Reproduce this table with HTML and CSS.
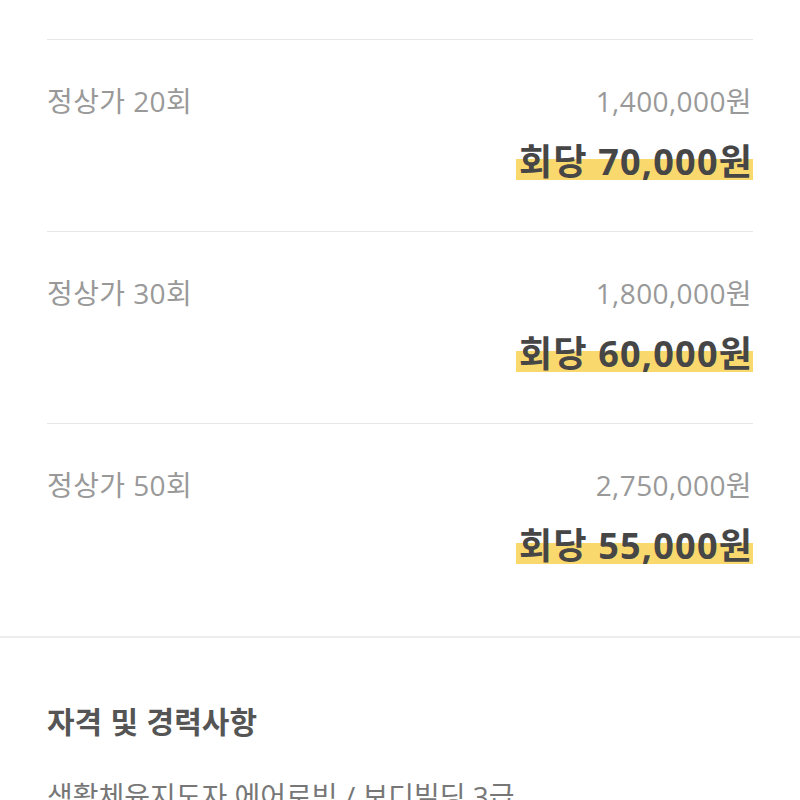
FILE: index.html
```html
<!DOCTYPE html>
<html lang="ko">
<head>
<meta charset="utf-8">
<link rel="stylesheet" href="styles.css">
</head>
<body>
<div class="page">
  <section class="prices">
    <div class="row">
      <div class="line">
        <span class="label">정상가 20회</span>
        <span class="total">1,400,000원</span>
      </div>
      <div class="per"><span class="hl">회당 70,000원</span></div>
    </div>
    <div class="row">
      <div class="line">
        <span class="label">정상가 30회</span>
        <span class="total">1,800,000원</span>
      </div>
      <div class="per"><span class="hl">회당 60,000원</span></div>
    </div>
    <div class="row last">
      <div class="line">
        <span class="label">정상가 50회</span>
        <span class="total">2,750,000원</span>
      </div>
      <div class="per"><span class="hl">회당 55,000원</span></div>
    </div>
  </section>
  <section class="career">
    <h2 class="title">자격 및 경력사항</h2>
    <p class="item">생활체육지도자 에어로빅 / 보디빌딩 3급</p>
  </section>
</div>
</body>
</html>
```
FILE: styles.css
```css
html, body {
  margin: 0;
  padding: 0;
  background: #fff;
}
body {
  font-family: "Open Sans", "Noto Sans CJK KR", sans-serif;
  overflow: hidden;
}
.page {
  width: 800px;
  padding-top: 39px;
}
.prices {
  padding: 0 47px 0 47px;
  border-bottom: 2px solid #ececec;
}
.row {
  border-top: 1px solid #e6e6e6;
  padding: 43px 0 48px;
}
.row.last {
  padding-bottom: 69px;
}
.line {
  display: flex;
  justify-content: space-between;
  align-items: center;
  height: 34px;
  font-size: 28px;
  letter-spacing: 0.4px;
  color: #999;
}
.total {
  padding-right: 1px;
}
.per {
  margin-top: 24px;
  display: flex;
  justify-content: flex-end;
  height: 42px;
  align-items: center;
}
.hl {
  font-size: 36px;
  font-weight: 700;
  color: #464646;
  line-height: 42px;
  letter-spacing: 1.2px;
  padding: 0 0 0 3px;
  background: linear-gradient(to bottom, transparent 43%, #f9d96e 43%, #f9d96e 93%, transparent 93%);
}
.career {
  padding: 0 47px;
}
.title {
  margin: 62px 0 0;
  font-family: "Noto Sans CJK KR", sans-serif;
  font-size: 30px;
  font-weight: 700;
  color: #555;
  line-height: 40px;
}
.item {
  margin: 38px 0 0;
  font-size: 28px;
  color: #777;
  line-height: 36px;
}
```
